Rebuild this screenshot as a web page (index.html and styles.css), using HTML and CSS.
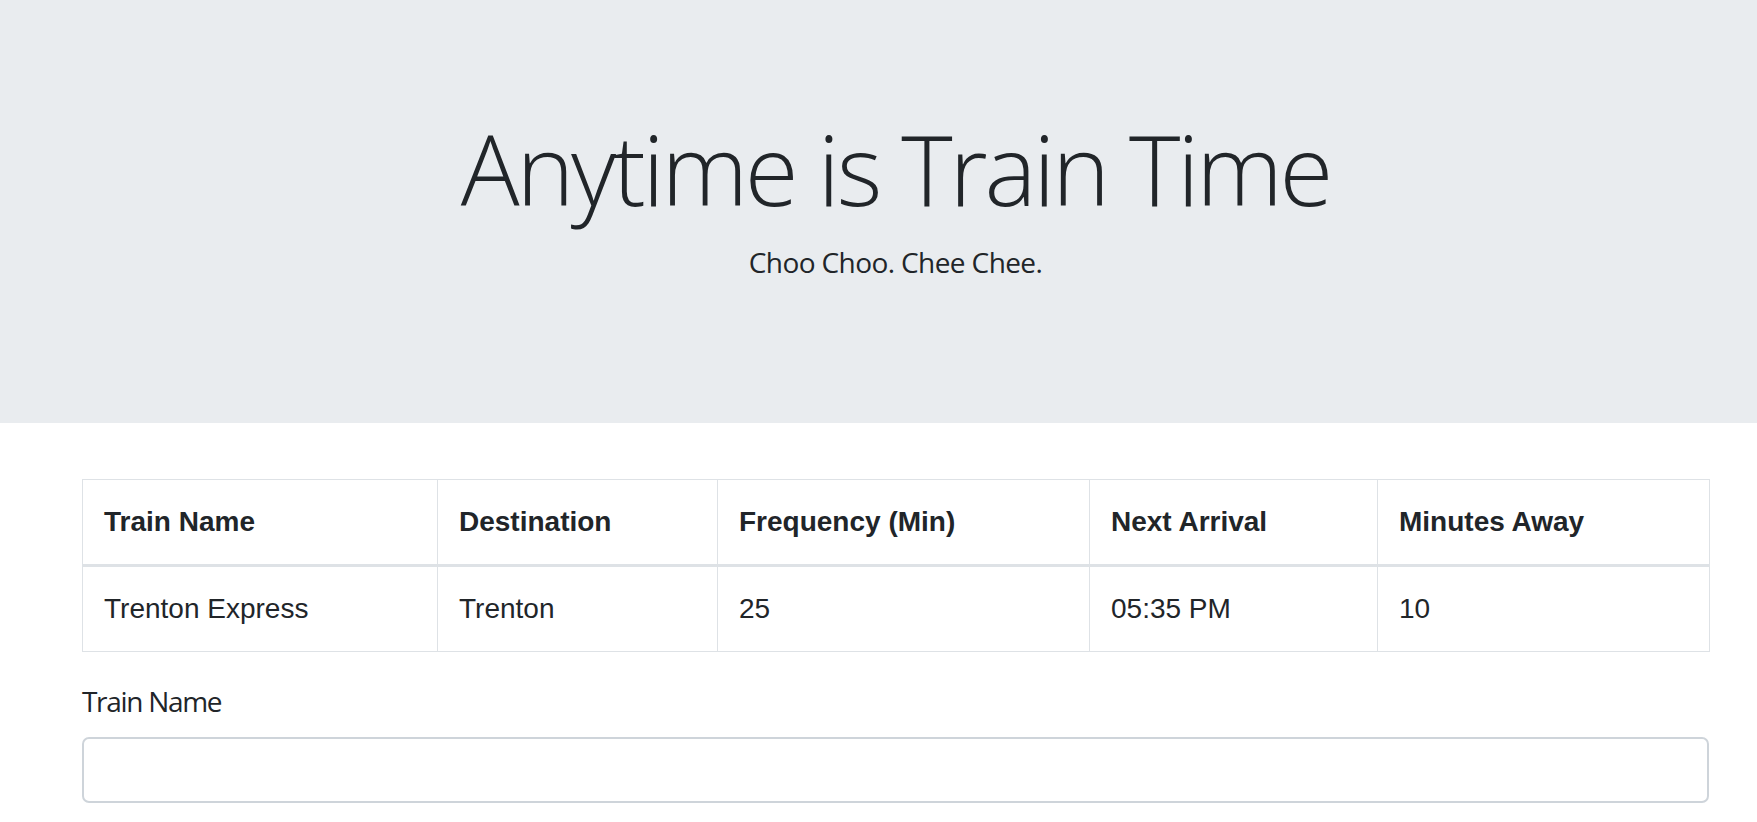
FILE: index.html
```html
<!DOCTYPE html>
<html lang="en">
<head>
<meta charset="utf-8">
<title>Train Time</title>
<link rel="stylesheet" href="styles.css">
</head>
<body>
<header class="jumbotron">
  <div class="jumbo-inner">
    <h1 class="display">Anytime is Train Time</h1>
    <p class="subtitle">Choo Choo. Chee Chee.</p>
  </div>
</header>
<main class="container">
  <table class="trains">
    <colgroup>
      <col class="c-name">
      <col class="c-dest">
      <col class="c-freq">
      <col class="c-next">
      <col class="c-away">
    </colgroup>
    <thead>
      <tr>
        <th>Train Name</th>
        <th>Destination</th>
        <th>Frequency (Min)</th>
        <th>Next Arrival</th>
        <th>Minutes Away</th>
      </tr>
    </thead>
    <tbody>
      <tr>
        <td>Trenton Express</td>
        <td>Trenton</td>
        <td>25</td>
        <td>05:35 PM</td>
        <td>10</td>
      </tr>
    </tbody>
  </table>
  <form class="train-form">
    <div class="form-group">
      <label class="form-label" for="train-name">Train Name</label>
      <input class="form-input" id="train-name" type="text">
    </div>
  </form>
</main>
</body>
</html>
```
FILE: styles.css
```css
html, body {
  margin: 0;
  padding: 0;
  overflow: hidden;
}
body {
  background: #ffffff;
  color: #212529;
  font-family: "Open Sans", "Noto Sans", sans-serif;
  font-size: 28px;
  line-height: 42px;
}
.jumbotron {
  background: #e9ecef;
  padding: 109px 0 112px;
  margin-bottom: 56px;
  height: 423px;
  box-sizing: border-box;
}
.jumbo-inner {
  width: 1627px;
  margin-left: 82px;
  text-align: center;
}
.display {
  margin: 0 0 14px;
  font-family: "Open Sans", "Noto Sans", sans-serif;
  font-weight: 300;
  font-size: 98px;
  line-height: 118px;
  letter-spacing: -3.2px;
  color: #212529;
}
.subtitle {
  margin: 0 0 28px;
  font-size: 28px;
  line-height: 42px;
  letter-spacing: -0.6px;
}
.container {
  width: 1627px;
  margin-left: 82px;
}
.trains {
  width: 1627px;
  border-collapse: collapse;
  table-layout: fixed;
  margin-bottom: 28px;
  font-family: "Liberation Sans", Arial, sans-serif;
  font-size: 28px;
  line-height: 42px;
  color: #212529;
}
.c-name { width: 355px; }
.c-dest { width: 280px; }
.c-freq { width: 372px; }
.c-next { width: 288px; }
.c-away { width: 332px; }
.trains th,
.trains td {
  border: 1px solid #dee2e6;
  padding: 21px 21px;
  text-align: left;
  vertical-align: top;
}
.trains th {
  font-weight: bold;
  border-bottom: 3px solid #dee2e6;
}
.form-group {
  display: flex;
  flex-direction: column;
}
.form-label {
  font-size: 28px;
  line-height: 42px;
  letter-spacing: -1.3px;
  margin-bottom: 15px;
}
.form-input {
  box-sizing: border-box;
  width: 1627px;
  height: 66px;
  border: 2px solid #ced4da;
  border-radius: 7px;
  background: #fff;
  padding: 10px 21px;
  font-size: 28px;
}
```
